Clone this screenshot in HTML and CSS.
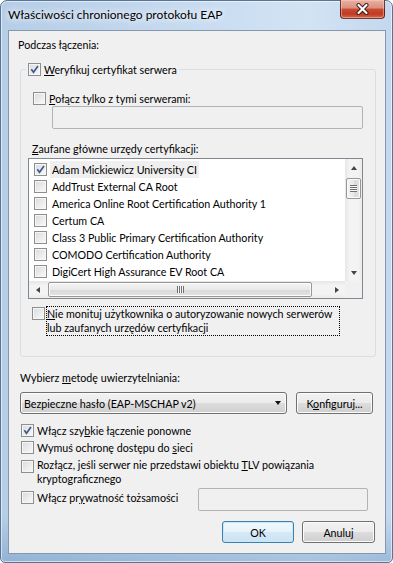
FILE: index.html
```html
<!DOCTYPE html>
<html lang="pl">
<head>
    <meta charset="UTF-8">
    <meta name="viewport" content="width=device-width, initial-scale=1.0">
    <title>Właściwości chronionego protokołu EAP</title>
    <link rel="stylesheet" href="styles.css">
</head>
<body>

    <div class="window">

        <!-- pasek tytułu -->
        <div class="titlebar">
            <span class="title">Właściwości chronionego protokołu EAP</span>
            <button class="close" type="button" aria-label="Zamknij">
                <svg width="13" height="12" viewBox="0 0 13 12">
                    <path d="M2.5 2 L10.5 10 M10.5 2 L2.5 10" stroke="#3d1a14" stroke-width="4" stroke-linecap="round"/>
                    <path d="M2.5 2 L10.5 10 M10.5 2 L2.5 10" stroke="#fff" stroke-width="2.2" stroke-linecap="round"/>
                </svg>
            </button>
        </div>

        <div class="client">
            <div class="label top-label">Podczas łączenia:</div>

            <fieldset class="group">
                <legend class="check group-legend">
                    <span class="cb is-checked"><svg viewBox="0 0 11 11"><path d="M2.3 5.3 L4.5 8.3 L9 2"/></svg></span>
                    <span><u>W</u>eryfikuj certyfikat serwera</span>
                </legend>

                <div class="check servers-check">
                    <span class="cb"></span>
                    <span><u>P</u>ołącz tylko z tymi serwerami:</span>
                </div>
                <div class="textbox servers-box"></div>

                <div class="label ca-label"><u>Z</u>aufane główne urzędy certyfikacji:</div>

                <div class="listbox">
                    <div class="list-main">
                        <ul class="list-items">
                            <li class="list-row">
                                <span class="cb is-checked"><svg viewBox="0 0 11 11"><path d="M2.3 5.3 L4.5 8.3 L9 2"/></svg></span>
                                <span class="row-text is-selected">Adam Mickiewicz University CI</span>
                            </li>
                            <li class="list-row"><span class="cb"></span><span class="row-text">AddTrust External CA Root</span></li>
                            <li class="list-row"><span class="cb"></span><span class="row-text">America Online Root Certification Authority 1</span></li>
                            <li class="list-row"><span class="cb"></span><span class="row-text">Certum CA</span></li>
                            <li class="list-row"><span class="cb"></span><span class="row-text">Class 3 Public Primary Certification Authority</span></li>
                            <li class="list-row"><span class="cb"></span><span class="row-text">COMODO Certification Authority</span></li>
                            <li class="list-row"><span class="cb"></span><span class="row-text">DigiCert High Assurance EV Root CA</span></li>
                        </ul>
                        <div class="vscroll">
                            <span class="sb-btn"><span class="arrow arrow-up"></span></span>
                            <span class="vthumb"><span class="grip"></span></span>
                            <span class="sb-fill"></span>
                            <span class="sb-btn"><span class="arrow arrow-down"></span></span>
                        </div>
                    </div>
                    <div class="hscroll-row">
                        <div class="hscroll">
                            <span class="sb-btn"><span class="arrow arrow-left"></span></span>
                            <span class="hthumb"><span class="grip"></span></span>
                            <span class="sb-fill"></span>
                            <span class="sb-btn"><span class="arrow arrow-right"></span></span>
                        </div>
                        <div class="sb-corner"></div>
                    </div>
                </div>

                <div class="check two-line prompt-check">
                    <span class="cb"></span>
                    <span class="focus-text"><u>N</u>ie monituj użytkownika o autoryzowanie nowych serwerów<br>lub zaufanych urzędów certyfikacji</span>
                </div>
            </fieldset>

            <div class="label method-label">Wybierz <u>m</u>etodę uwierzytelniania:</div>
            <div class="method-row">
                <div class="combo">
                    <span>Bezpieczne hasło (EAP-MSCHAP v2)</span>
                    <span class="arrow arrow-down combo-arrow"></span>
                </div>
                <button class="btn configure" type="button">K<u>o</u>nfiguruj...</button>
            </div>

            <div class="check opt-fast">
                <span class="cb is-checked"><svg viewBox="0 0 11 11"><path d="M2.3 5.3 L4.5 8.3 L9 2"/></svg></span>
                <span>Włącz szy<u>b</u>kie łączenie ponowne</span>
            </div>
            <div class="check opt-nap">
                <span class="cb"></span>
                <span>Wymuś ochronę dostępu do <u>s</u>ieci</span>
            </div>
            <div class="check two-line opt-tlv">
                <span class="cb"></span>
                <span>Rozłącz, jeśli serwer nie przedstawi obiektu <u>T</u>LV powiązania<br>kryptograficznego</span>
            </div>
            <div class="privacy-row">
                <div class="check opt-privacy">
                    <span class="cb"></span>
                    <span>Włącz pr<u>y</u>watność tożsamości</span>
                </div>
                <div class="textbox privacy-box"></div>
            </div>

            <div class="dialog-buttons">
                <button class="btn btn-default" type="button">OK</button>
                <button class="btn" type="button">Anuluj</button>
            </div>
        </div>
    </div>

</body>
</html>
```

FILE: styles.css
```css
/* podstawy */
* {
    box-sizing: border-box;
}

html, body {
    margin: 0;
    padding: 0;
}

body {
    width: 393px;
    height: 563px;
    overflow: hidden;
    background: #fff;
    font-family: Lato, "Noto Sans", sans-serif;
    font-size: 10.7px;
    color: #000;
}

u {
    text-decoration: underline;
    text-underline-offset: 1px;
}

/* okno z ramką Aero */
.window {
    width: 393px;
    height: 563px;
    display: flex;
    flex-direction: column;
    padding: 0 6px 8px 7px;
    border: 1px solid #587593;
    border-radius: 7px 7px 5px 5px;
    background:
        linear-gradient(to bottom, rgba(255, 255, 255, 0) 92%, rgba(80, 130, 180, 0.35) 100%),
        linear-gradient(to right, #b5cde7 0%, #c2d7ee 35%, #d2e3f4 78%, #c3d8ef 100%);
    box-shadow: inset 0 0 0 1px rgba(255, 255, 255, 0.55);
}

.titlebar {
    height: 29px;
    flex-shrink: 0;
    display: flex;
    justify-content: space-between;
    align-items: flex-start;
}

.title {
    padding-top: 6px;
    line-height: 15px;
    font-size: 12px;
    text-shadow: 0 0 6px #fff, 0 0 10px rgba(255, 255, 255, 0.9);
}

.close {
    width: 45px;
    height: 19px;
    margin: -1px 1px 0 0;
    padding: 0;
    display: flex;
    justify-content: center;
    align-items: center;
    border: 1px solid rgba(70, 20, 12, 0.75);
    border-top: none;
    border-radius: 0 0 4px 4px;
    background: linear-gradient(to bottom, #eab1a3 0%, #dc8f7d 45%, #c94c35 50%, #c13a22 78%, #d56a4e 100%);
    box-shadow: inset 0 0 0 1px rgba(255, 210, 200, 0.45);
}

.close svg {
    display: block;
}

/* obszar klienta */
.client {
    flex: 1;
    display: flex;
    flex-direction: column;
    border: 1px solid #8797aa;
    background: #f0f0f0;
}

.label {
    line-height: 15px;
    white-space: nowrap;
}

.top-label {
    margin: 6px 0 0 9px;
}

/* ramka grupy */
.group {
    margin: 10px 9px 0 11px;
    padding: 0 0 20px 0;
    min-width: 0;
    border: 1px solid #d5dfe5;
    border-radius: 3px;
}

.group-legend {
    margin-left: 5px;
    padding: 0 2px;
}

/* pola wyboru */
.check {
    display: flex;
    align-items: flex-start;
    line-height: 15px;
    white-space: nowrap;
}

.cb {
    width: 13px;
    height: 13px;
    flex-shrink: 0;
    margin: 1px 3px 0 0;
    border: 1px solid #8e8f8f;
    background: linear-gradient(135deg, #d8dadd 0%, #ececee 55%, #fafafa 100%);
    box-shadow: inset 0 0 0 1px #f6f6f6;
}

.cb svg {
    display: block;
    width: 11px;
    height: 11px;
}

.cb path {
    fill: none;
    stroke: #3e5b8c;
    stroke-width: 1.7;
}

.servers-check {
    margin: 14px 0 0 12px;
}

.textbox {
    height: 23px;
    border: 1px solid #b0b4b8;
    border-radius: 2px;
    background: #f0f0f0;
}

.servers-box {
    width: 311px;
    margin-left: 31px;
}

.ca-label {
    margin: 12px 0 0 11px;
}

/* lista certyfikatów */
.listbox {
    width: 335px;
    height: 141px;
    margin: 2px 0 0 7px;
    display: flex;
    flex-direction: column;
    border: 1px solid #828790;
    background: #fff;
}

.list-main {
    flex: 1;
    display: flex;
    min-height: 0;
}

.list-items {
    flex: 1;
    margin: 0;
    padding: 2px 0 0 0;
    list-style: none;
    overflow: hidden;
}

.list-row {
    height: 17px;
    display: flex;
    align-items: center;
    white-space: nowrap;
}

.list-row .cb {
    margin: 0 3px 0 5px;
}

.row-text {
    padding: 0 2px;
    line-height: 17px;
}

.row-text.is-selected {
    background: #efefef;
}

/* paski przewijania */
.vscroll {
    width: 17px;
    display: flex;
    flex-direction: column;
    background: linear-gradient(to right, #e6e6e6 0%, #f3f3f3 25%, #f3f3f3 75%, #ebebeb 100%);
}

.hscroll-row {
    height: 17px;
    display: flex;
}

.hscroll {
    flex: 1;
    display: flex;
    background: linear-gradient(to bottom, #e6e6e6 0%, #f3f3f3 25%, #f3f3f3 75%, #ebebeb 100%);
}

.sb-corner {
    width: 17px;
    background: #f0f0f0;
}

.sb-btn {
    width: 17px;
    height: 17px;
    flex-shrink: 0;
    display: flex;
    justify-content: center;
    align-items: center;
}

.sb-fill {
    flex: 1;
}

.arrow {
    width: 0;
    height: 0;
    border-style: solid;
    border-color: transparent;
}

.arrow-up {
    border-width: 0 3.5px 4px 3.5px;
    border-bottom-color: #444;
}

.arrow-down {
    border-width: 4px 3.5px 0 3.5px;
    border-top-color: #444;
}

.arrow-left {
    border-width: 3.5px 4px 3.5px 0;
    border-right-color: #444;
}

.arrow-right {
    border-width: 3.5px 0 3.5px 4px;
    border-left-color: #444;
}

.vthumb {
    height: 21px;
    margin: 2px 1px 0 1px;
    display: flex;
    justify-content: center;
    align-items: center;
    border: 1px solid #979797;
    border-radius: 2px;
    background: linear-gradient(to right, #f4f4f4 0%, #e9e9e9 50%, #dadada 51%, #e2e2e2 100%);
    box-shadow: inset 0 0 0 1px #fbfbfb;
}

.vthumb .grip {
    width: 7px;
    height: 7px;
    background: repeating-linear-gradient(to bottom, #6e6e6e 0 1px, #f8f8f8 1px 2px);
}

.hthumb {
    width: 264px;
    margin: 1px 0 1px 2px;
    display: flex;
    justify-content: center;
    align-items: center;
    border: 1px solid #979797;
    border-radius: 2px;
    background: linear-gradient(to bottom, #f4f4f4 0%, #e9e9e9 50%, #dadada 51%, #e2e2e2 100%);
    box-shadow: inset 0 0 0 1px #fbfbfb;
}

.hthumb .grip {
    width: 7px;
    height: 7px;
    background: repeating-linear-gradient(to right, #6e6e6e 0 1px, #f8f8f8 1px 2px);
}

.two-line {
    line-height: 14px;
}

.prompt-check {
    margin: 7px 0 0 11px;
}

.prompt-check .cb {
    margin: 1px 1px 0 0;
}

.focus-text {
    width: 294px;
    border: 1px dotted #000;
}

/* metoda uwierzytelniania */
.method-label {
    margin: 13px 0 0 11px;
}

.method-row {
    margin: 7px 0 0 11px;
    display: flex;
    gap: 9px;
}

.combo {
    width: 267px;
    height: 22px;
    padding: 0 5px 0 3px;
    display: flex;
    justify-content: space-between;
    align-items: center;
    border: 1px solid #707070;
    border-radius: 3px;
    background: linear-gradient(to bottom, #f2f2f2 0%, #ebebeb 50%, #dddddd 50%, #cfcfcf 100%);
    box-shadow: inset 0 0 0 1px #fbfbfb;
    white-space: nowrap;
}

.combo-arrow {
    border-width: 4px 3.5px 0 3.5px;
    border-top-color: #111;
}

.btn {
    height: 22px;
    padding: 0;
    font-family: inherit;
    font-size: inherit;
    color: #000;
    border: 1px solid #707070;
    border-radius: 3px;
    background: linear-gradient(to bottom, #f2f2f2 0%, #ebebeb 50%, #dddddd 50%, #cfcfcf 100%);
    box-shadow: inset 0 0 0 1px #fbfbfb;
}

.configure {
    width: 77px;
}

.opt-fast {
    margin: 9px 0 0 12px;
}

.opt-nap {
    margin: 2px 0 0 12px;
}

.opt-tlv {
    margin: 3px 0 0 12px;
}

.opt-tlv .cb {
    margin-top: 2px;
}

.privacy-row {
    margin: 2px 0 0 12px;
    display: flex;
    align-items: flex-start;
}

.opt-privacy {
    margin-top: 2px;
}

.privacy-box {
    width: 170px;
    margin-left: auto;
    margin-right: 17px;
}

.dialog-buttons {
    margin: 10px 10px 0 0;
    display: flex;
    justify-content: flex-end;
    gap: 8px;
}

.dialog-buttons .btn {
    width: 73px;
}

.dialog-buttons .btn-default {
    width: 72px;
    border-color: #3c7fb1;
    background: linear-gradient(to bottom, #f1f8fd 0%, #e6f2fa 50%, #d6e9f6 50%, #cbe3f3 100%);
    box-shadow: inset 0 0 0 1px #c8e8fa;
}
```
